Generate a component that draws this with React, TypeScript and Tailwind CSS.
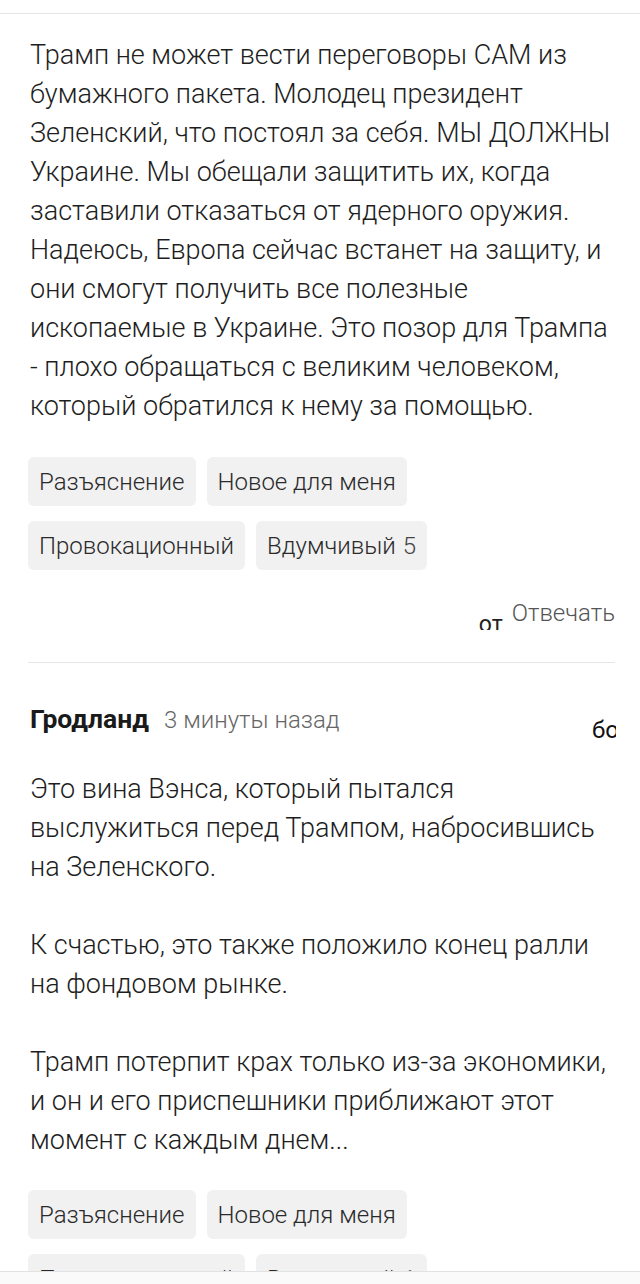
import React from "react";

const font = { fontFamily: "Roboto, 'Noto Sans', sans-serif" };

function Tag({ label, count }: { label: string; count?: number }) {
  return (
    <div className="h-[49px] px-[11px] flex items-center rounded-[6px] bg-[#f1f1f1] text-[24px] font-light text-[#2a2a2a] whitespace-nowrap">
      {label}
      {count !== undefined && <span className="ml-[7px] text-[#444]">{count}</span>}
    </div>
  );
}

function Reactions({ last, count }: { last: string; count: number }) {
  return (
    <div className="flex flex-col gap-[15px] px-[28px]">
      <div className="flex gap-[11px]">
        <Tag label="Разъяснение" />
        <Tag label="Новое для меня" />
      </div>
      <div className="flex gap-[11px]">
        <Tag label="Провокационный" />
        <Tag label={last} count={count} />
      </div>
    </div>
  );
}

function Lines({ lines }: { lines: string[] }) {
  return (
    <>
      {lines.map((l, i) => (
        <span key={i} className="block whitespace-nowrap">
          {l}
        </span>
      ))}
    </>
  );
}

export default function App() {
  return (
    <div className="w-[640px] h-[1284px] bg-white flex flex-col overflow-hidden" style={font}>
      <div className="flex-1 overflow-hidden">
        <div className="mt-[13px] border-t border-[#e6e6e6]" />
        <p className="px-[30px] pt-[22px] text-[27px] leading-[39px] font-light text-[#1e1e1e]">
          <Lines
            lines={[
              "Трамп не может вести переговоры САМ из",
              "бумажного пакета. Молодец президент",
              "Зеленский, что постоял за себя. МЫ ДОЛЖНЫ",
              "Украине. Мы обещали защитить их, когда",
              "заставили отказаться от ядерного оружия.",
              "Надеюсь, Европа сейчас встанет на защиту, и",
              "они смогут получить все полезные",
              "ископаемые в Украине. Это позор для Трампа",
              "- плохо обращаться с великим человеком,",
              "который обратился к нему за помощью.",
            ]}
          />
        </p>
        <div className="mt-[31px]">
          <Reactions last="Вдумчивый" count={5} />
        </div>
        <div className="mt-[30px] flex justify-end items-start pr-[25px] h-[32px]">
          <div className="h-[30px] overflow-hidden mr-[9px]">
            <div className="mt-[12px] text-[23px] leading-[26px] text-[#222]">от</div>
          </div>
          <div className="text-[24px] leading-[26px] font-light text-[#555]">Отвечать</div>
        </div>
        <div className="mt-[30px] mx-[28px] mr-[25px] border-t border-[#e6e6e6]" />
        <div className="mt-[36px] flex justify-between items-start pl-[30px] pr-[24px]">
          <div className="flex items-baseline gap-[15px]">
            <span className="text-[26.5px] font-bold text-[#1a1a1a]">Гродланд</span>
            <span className="text-[24px] font-light text-[#666]">3 минуты назад</span>
          </div>
          <div className="w-[24px] overflow-hidden mt-[17px] text-[24px] leading-[28px] text-[#111] whitespace-nowrap">
            бо
          </div>
        </div>
        <div className="px-[30px] pt-[26px] text-[27px] leading-[39px] font-light text-[#1e1e1e]">
          <p>
            <Lines
              lines={[
                "Это вина Вэнса, который пытался",
                "выслужиться перед Трампом, набросившись",
                "на Зеленского.",
              ]}
            />
          </p>
          <p className="mt-[39px]">
            <Lines lines={["К счастью, это также положило конец ралли", "на фондовом рынке."]} />
          </p>
          <p className="mt-[39px]">
            <Lines
              lines={[
                "Трамп потерпит крах только из-за экономики,",
                "и он и его приспешники приближают этот",
                "момент с каждым днем...",
              ]}
            />
          </p>
        </div>
        <div className="mt-[30px]">
          <Reactions last="Вдумчивый" count={1} />
        </div>
      </div>
      <div className="h-[13px] shrink-0 border-t border-[#e2e2e2] bg-[#fafafa]" />
    </div>
  );
}
